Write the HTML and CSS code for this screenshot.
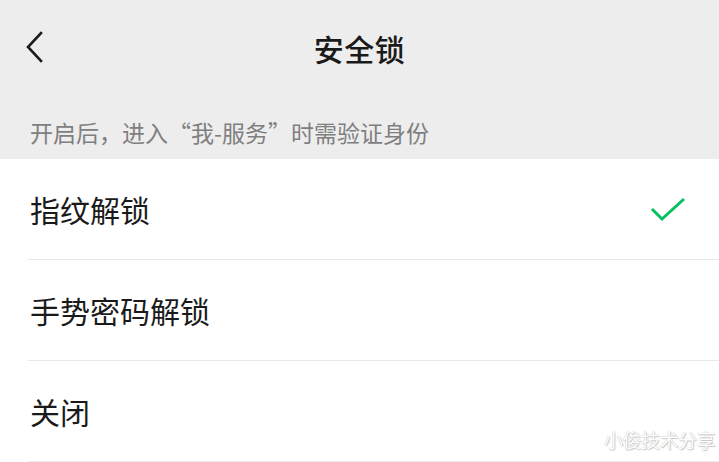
FILE: index.html
```html
<!DOCTYPE html>
<html lang="zh-CN">
<head>
<meta charset="utf-8">
<title>安全锁</title>
<link rel="stylesheet" href="styles.css">
</head>
<body>
<div class="page">
  <header class="nav">
    <svg class="back" width="20" height="32" viewBox="0 0 20 32"><path d="M16 2 L3 16 L16 30" fill="none" stroke="#1a1a1a" stroke-width="2.6" stroke-linecap="square"/></svg>
    <h1 class="title">安全锁</h1>
  </header>
  <p class="tip">开启后，进入“我-服务”时需验证身份</p>
  <ul class="list">
    <li class="item"><span>指纹解锁</span>
      <svg class="check" width="36" height="26" viewBox="0 0 36 26"><path d="M2 12 L12 22 L34 2" fill="none" stroke="#07c160" stroke-width="3"/></svg>
    </li>
    <li class="item"><span>手势密码解锁</span></li>
    <li class="item"><span>关闭</span></li>
  </ul>
  <div class="mark">小俊技术分享</div>
</div>
</body>
</html>
```
FILE: styles.css
```css
html, body {
  margin: 0;
  padding: 0;
  background: #ededed;
  font-family: "Noto Sans CJK SC", "Noto Sans", sans-serif;
}
.page {
  position: relative;
  width: 719px;
  height: 462px;
  overflow: hidden;
}
.nav {
  position: relative;
  height: 95px;
  display: flex;
  align-items: center;
  justify-content: center;
}
.back {
  position: absolute;
  left: 25px;
  top: 31px;
}
.title {
  margin: 0;
  padding-top: 1px;
  font-size: 30px;
  font-weight: 500;
  color: #1a1a1a;
  line-height: 1;
  letter-spacing: 0.5px;
}
.tip {
  margin: 0;
  height: 64px;
  box-sizing: border-box;
  padding: 25px 0 0 30px;
  font-size: 23px;
  line-height: 24px;
  color: #7f7f7f;
}
.list {
  list-style: none;
  margin: 0;
  padding: 0 0 0 28px;
  background: #fff;
}
.item {
  height: 100px;
  display: flex;
  align-items: center;
  justify-content: space-between;
  padding-left: 2px;
  padding-right: 33px;
  border-bottom: 1px solid #e9e9e9;
  font-size: 30px;
  color: #1a1a1a;
}
.item:last-child {
  border-bottom-color: #ececec;
}
.check {
  margin-top: 2px;
}
.mark {
  position: absolute;
  right: 4px;
  bottom: 9px;
  font-size: 19px;
  color: #fff;
  text-shadow: 0 0 1px #aaa, 1px 1px 1px #ccc;
  letter-spacing: -0.5px;
}
```
